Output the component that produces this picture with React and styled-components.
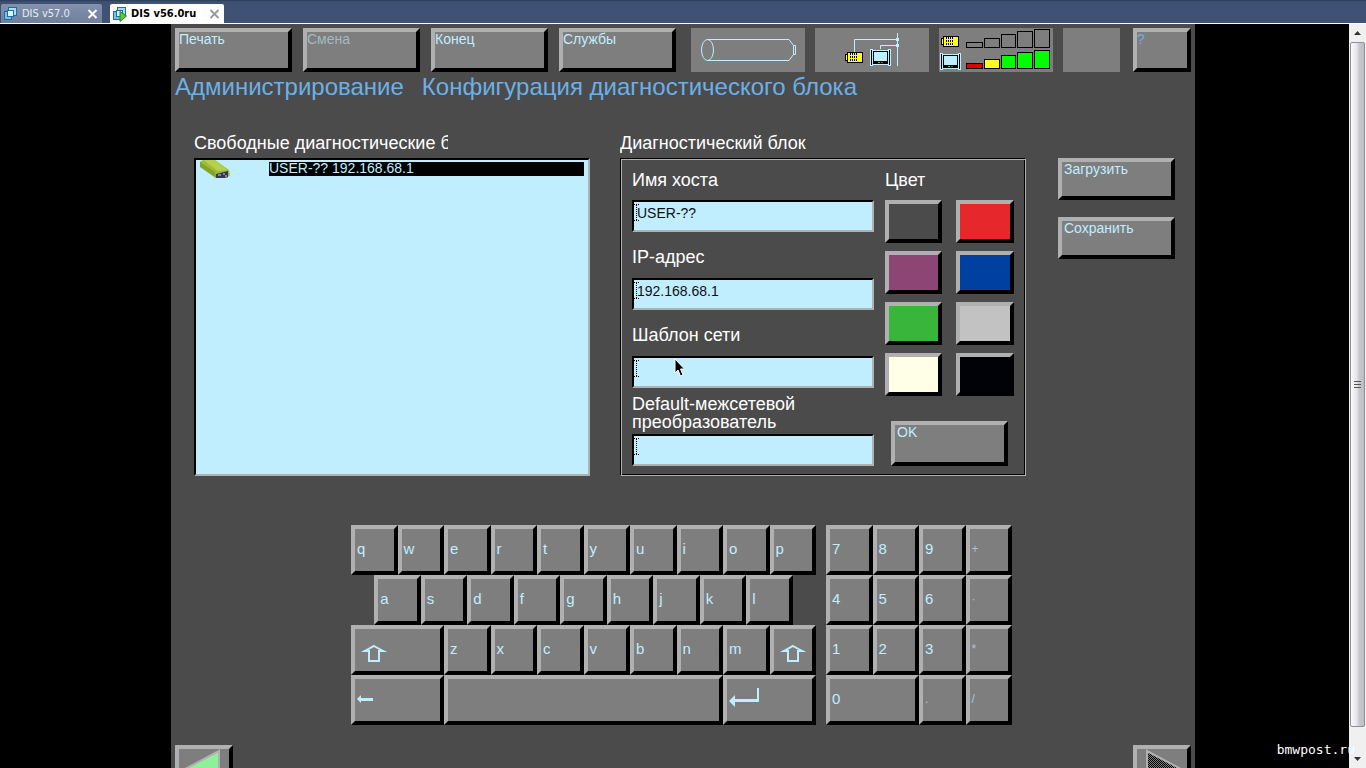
import React, { useState } from "react";
import styled, { createGlobalStyle } from "styled-components";

const c = {
  ground: "#4b4b4b",
  face: "#7e7e7e",
  light: "#b0b0b0",
  ink: "#c0eeff",
  title: "#6cb0e6",
  field: "#c0eeff",
};

const Global = createGlobalStyle`
  * { box-sizing: border-box; }
  html, body, #root { height: 100%; }
  body { margin: 0; overflow: hidden; background: #000; font-family: "Liberation Sans", Arial, sans-serif; }
  button, input { font-family: inherit; border-radius: 0; margin: 0; }
  svg { display: block; flex: none; }
`;

const Page = styled.div`
  height: 100vh;
  display: flex;
  flex-direction: column;
  position: relative;
`;

const TabBar = styled.nav`
  flex: none;
  height: 24px;
  display: flex;
  align-items: flex-end;
  gap: 8px;
  padding-left: 1px;
  background: linear-gradient(#2b3b58 0, #3f5275 2px, #3f5275 100%);
  border-bottom: 1px solid #fff;
`;

const Tab = styled.div`
  display: flex;
  align-items: center;
  width: ${(p) => (p.$active ? 114 : 101)}px;
  height: 19px;
  padding: 0 4px 0 2px;
  border-radius: 2px 2px 0 0;
  background: ${(p) => (p.$active ? "#fff" : "linear-gradient(#8391ac, #6f7f9d)")};
`;

const TabName = styled.a`
  flex: 1;
  margin-left: 3px;
  font: ${(p) => (p.$active ? "bold" : "normal")} 11px/18px "DejaVu Sans Condensed", "DejaVu Sans", sans-serif;
  color: ${(p) => (p.$active ? "#000" : "#e6ebf3")};
  text-decoration: none;
  white-space: nowrap;
`;

const CloseButton = styled.button`
  display: flex;
  padding: 0;
  border: 0;
  background: none;
  color: ${(p) => (p.$active ? "#9a9a9a" : "#fff")};
`;

const Viewer = styled.div`
  flex: 1;
  min-height: 0;
  display: grid;
  grid-template-columns: 17px minmax(0, 1fr) 17px;
`;

const Screen = styled.main`
  grid-column: 2;
  justify-self: center;
  width: 100%;
  max-width: 1024px;
  min-height: 0;
  overflow: hidden;
  padding: 4px 4px 0;
  background: ${c.ground};
`;

const Toolbar = styled.div`
  display: flex;
  justify-content: space-between;
`;

const Group = styled.div`
  display: flex;
  gap: ${(p) => p.$gap}px;
  padding-left: ${(p) => p.$lead || 0}px;
`;

const Raised = styled.button`
  display: flex;
  align-items: flex-start;
  flex: none;
  width: ${(p) => p.$w || 117}px;
  height: ${(p) => p.$h || 44}px;
  padding: 0 ${(p) => p.$pad || 0}px;
  border: 4px solid;
  border-color: ${c.light} #000 #000 ${c.light};
  background: ${(p) => p.$face || c.face};
  color: ${(p) => p.$color || c.ink};
  font-size: 14px;
  line-height: 14px;
  text-align: left;
  &:disabled { color: #a3bac1; }
`;

const Indicator = styled.div`
  width: ${(p) => p.$w || 114}px;
  height: 44px;
  background: ${c.face};
`;

const Title = styled.h1`
  display: flex;
  gap: 18px;
  margin: 0;
  font-size: 24px;
  line-height: 30px;
  font-weight: normal;
  color: ${c.title};
  white-space: nowrap;
`;

const Columns = styled.div`
  display: flex;
  align-items: flex-start;
  padding: 31px 16px 0 19px;
`;

const Section = styled.section`
  width: ${(p) => p.$w}px;
  margin-right: ${(p) => p.$after}px;
`;

const Caption = styled.h2`
  margin: 0;
  width: ${(p) => (p.$clip ? "254px" : "auto")};
  overflow: hidden;
  font-size: 18px;
  line-height: 20px;
  height: 25px;
  font-weight: normal;
  color: #fff;
  white-space: nowrap;
`;

const ListBox = styled.ul`
  height: 318px;
  margin: 0;
  padding: 0 4px;
  list-style: none;
  border: 2px solid;
  border-color: #000 ${c.light} ${c.light} #000;
  background: ${c.field};
`;

const ListRow = styled.li`
  display: flex;
  align-items: flex-start;
`;

const ListText = styled.span`
  flex: 1;
  margin: 2px 0 0 39px;
  height: 14px;
  font-size: 14px;
  line-height: 12px;
  color: ${c.ink};
  background: #000;
`;

const Panel = styled.form`
  display: flex;
  gap: 11px;
  height: 318px;
  padding: 0 11px;
  border: 1px solid;
  border-color: #000 ${c.light} ${c.light} #000;
  box-shadow: inset 1px 1px ${c.light}, inset -1px -1px #000;
`;

const Fields = styled.div`
  width: 242px;
`;

const Field = styled.div`
  position: relative;
`;

const FieldLabel = styled.label`
  display: flex;
  align-items: center;
  height: ${(p) => (p.$first ? 41 : 46)}px;
  padding-top: ${(p) => (p.$first ? 0 : 3)}px;
  font-size: 18px;
  line-height: 18px;
  color: #fff;
`;

const TextBox = styled.input`
  display: block;
  width: 100%;
  height: 32px;
  padding: 0 3px 6px;
  border: 2px solid;
  border-color: #000 ${c.light} ${c.light} #000;
  background: ${c.field};
  color: #111;
  font-size: 14px;
  outline: none;
`;

const Caret = styled.svg`
  position: absolute;
  left: 2px;
  bottom: 11px;
`;

const Colors = styled.div`
  width: 129px;
`;

const Swatches = styled.div`
  display: grid;
  grid-template-columns: 57px 58px;
  gap: 8px 14px;
  margin-bottom: 25px;
`;

const OkSlot = styled.div`
  padding-left: 6px;
`;

const Actions = styled.div`
  display: flex;
  flex-direction: column;
  gap: 17px;
  padding-top: 25px;
`;

const Keyboard = styled.div`
  display: flex;
  gap: 10px;
  padding: 49px 0 20px 176px;
`;

const Keys = styled.div`
  display: grid;
  grid-template-columns: repeat(${(p) => p.$units}, minmax(0, 1fr));
  grid-auto-rows: 50px;
  width: ${(p) => p.$w}px;
`;

const Key = styled.button`
  grid-column: ${(p) => (p.$at ? p.$at + " / " : "")}span ${(p) => p.$span || 2};
  display: flex;
  align-items: center;
  padding: 0 0 2px 2px;
  border: 4px solid;
  border-color: ${c.light} #000 #000 ${c.light};
  background: ${c.face};
  color: ${c.ink};
  font-size: 15px;
  line-height: 16px;
  &:disabled { color: #a9c6cf; font-size: 12px; }
`;

const ScrollBar = styled.div`
  grid-column: 3;
  display: flex;
  flex-direction: column;
  align-items: center;
  background: #f0f0f0;
`;

const ScrollArrow = styled.button`
  display: flex;
  align-items: center;
  justify-content: center;
  width: 17px;
  height: 18px;
  padding: 0;
  border: 0;
  background: none;
`;

const Thumb = styled.div`
  flex: 1;
  display: flex;
  align-items: center;
  justify-content: center;
  width: 15px;
  margin-bottom: 23px;
  border: 1px solid #8e8f93;
  border-radius: 2px;
  background: linear-gradient(90deg, #fafafa, #e6e6e9 45%, #c9cace 60%, #bcbdc3);
`;

const Watermark = styled.span`
  position: absolute;
  right: 11px;
  bottom: 9px;
  font: 13px/18px "DejaVu Sans Mono", monospace;
  color: #fff;
`;

const Pointer = styled.svg`
  position: absolute;
  left: 42px;
  bottom: 10px;
`;

function VmIcon({ running }) {
  return (
    <svg width="16" height="16" viewBox="0 0 16 16" aria-hidden="true">
      <g stroke="#1d6f9f" fill="#a8dcf2">
        <rect x="5.5" y="1.5" width="8" height="8" />
        <rect x="1.5" y="5.5" width="7" height="8" fill="#78bfe2" />
        <rect x="4.5" y="4.5" width="6" height="6" fill="#d9f3fc" />
      </g>
      {running && <path d="M8 5.5 14.5 10 8 15.5Z" fill="#5ccb3c" stroke="#23801a" />}
    </svg>
  );
}

function Cross() {
  return (
    <svg width="11" height="10" viewBox="0 0 11 10" aria-hidden="true">
      <path d="M1.5 1 9.5 9M9.5 1 1.5 9" stroke="currentColor" strokeWidth="2" />
    </svg>
  );
}

function BatteryGlyph({ x, y }) {
  return (
    <g transform={`translate(${x} ${y})`} shapeRendering="crispEdges">
      <rect x="0" y="2" width="3" height="7" fill="#000" />
      <rect x="1" y="3" width="1" height="5" fill="#ff3" />
      <rect x="2" y="0" width="16" height="11" fill="#000" />
      <rect x="3" y="1" width="14" height="9" fill="#ffff1e" />
      <path d="M5.5 1v9M7.5 1v9M9.5 1v9M11.5 1v9" stroke="#000" strokeDasharray="2 1" />
    </g>
  );
}

function MonitorGlyph({ x, y }) {
  return (
    <g transform={`translate(${x} ${y})`} shapeRendering="crispEdges">
      <path d="M0 0h3v1h15v-1h3v17h-3v-1h-15v1h-3z" fill={c.ink} />
      <rect x="1" y="1" width="1" height="15" fill="#000" />
      <rect x="19" y="1" width="1" height="15" fill="#000" />
      <rect x="3" y="2" width="15" height="13" fill="#000" />
      <rect x="4" y="3" width="13" height="9" fill={c.ink} />
      <rect x="8" y="13" width="2" height="1" fill="#4c4" />
      <rect x="11" y="13" width="2" height="1" fill="#d33" />
    </g>
  );
}

function CylinderDrawing() {
  return (
    <svg width="114" height="44" viewBox="0 0 114 44" fill="none" stroke={c.ink} aria-hidden="true">
      <ellipse cx="16.5" cy="22" rx="6" ry="10.5" />
      <path d="M16.5 11.5H98L102.5 17.5V26.5L98 32.5H16.5M102.5 17.5H104.5V26.5H102.5" />
    </svg>
  );
}

function WiringDrawing() {
  return (
    <svg width="114" height="44" viewBox="0 0 114 44" fill="none" aria-hidden="true">
      <path d="M39.5 24V11.5H82.5M65.5 21V17.5H82.5M82.5 5V38" stroke={c.ink} />
      <path d="M81 10h3v3h-3zM81 16h3v3h-3z" fill={c.ink} />
      <BatteryGlyph x={30} y={24} />
      <MonitorGlyph x={55} y={21} />
    </svg>
  );
}

const bars = [
  { x: 27, w: 17, top: 14, low: 35, color: "#e00000" },
  { x: 45, w: 16, top: 10, low: 31, color: "#ffff1e" },
  { x: 62, w: 15, top: 6, low: 27, color: "#00ff00" },
  { x: 78, w: 16, top: 3, low: 24, color: "#00ff00" },
  { x: 95, w: 16, top: 1, low: 22, color: "#00ff00" },
];

function SignalDrawing() {
  return (
    <svg width="114" height="44" viewBox="0 0 114 44" fill="none" aria-hidden="true">
      <BatteryGlyph x={2} y={8} />
      <MonitorGlyph x={1} y={25} />
      {bars.map((b) => (
        <g key={b.x} stroke="#000" shapeRendering="crispEdges">
          <rect x={b.x + 0.5} y={b.top + 0.5} width={b.w - 1} height={19 - b.top} />
          <rect x={b.x + 0.5} y={b.low + 0.5} width={b.w - 1} height={40 - b.low} fill={b.color} />
        </g>
      ))}
    </svg>
  );
}

function HeadIcon() {
  return (
    <svg width="30" height="18" viewBox="0 0 30 18" aria-hidden="true">
      <path d="M0 2 3 0H15L29 10 30 15 27 18H16L0 6Z" fill="#9dbb35" />
      <path d="M3 0H15L28 10 18 11Z" fill="#b5d04c" />
      <path d="M0 2 15 12 16 18 0 7Z" fill="#86a327" />
      <path d="M16 14 28 11 28 17 24 18H16Z" fill="#34375a" />
      <path d="M18 15h3M23 14h2M25 16h2" stroke="#c9cbe8" />
    </svg>
  );
}

function ShiftIcon() {
  return (
    <svg width="33" height="28" viewBox="0 0 33 28" fill="none" stroke={c.ink} strokeWidth="2" aria-hidden="true">
      <path d="M17 11 26 16H22V26H12V16H8Z" />
      <path d="M4 16.5 9 15V17ZM30 16.500 25 15V17Z" fill={c.ink} stroke="none" />
    </svg>
  );
}

function BackIcon() {
  return (
    <svg width="16" height="8" viewBox="0 0 16 8" fill={c.ink} aria-hidden="true">
      <path d="M0 4 4 0V3H16V6H4V8Z" />
    </svg>
  );
}

function EnterIcon() {
  return (
    <svg width="30" height="22" viewBox="0 0 30 22" aria-hidden="true">
      <path d="M29 0V13" fill="none" stroke={c.ink} strokeWidth="2" />
      <path d="M0 13 6 7V19ZM5 11H30V14H5Z" fill={c.ink} />
    </svg>
  );
}

function Arrow({ left }) {
  return (
    <svg width="50" height="40" viewBox="0 0 50 40" aria-hidden="true">
      <defs>
        <pattern id="mesh" width="2" height="2" patternUnits="userSpaceOnUse">
          <rect width="2" height="2" fill="#7e7e7e" />
          <path d="M0 0h1v1h-1zM1 1h1v1h-1z" fill="#000" />
        </pattern>
      </defs>
      {left ? (
        <path d="M40 2V37L6 20Z" fill="#8ff09a" stroke={c.light} strokeWidth="2" />
      ) : (
        <path d="M10 2V37L44 20Z" fill="url(#mesh)" stroke={c.light} strokeWidth="2" />
      )}
    </svg>
  );
}

const fields = [
  { id: "host", label: ["Имя хоста"], value: "USER-??" },
  { id: "ip", label: ["IP-адрес"], value: "192.168.68.1" },
  { id: "mask", label: ["Шаблон сети"], value: "", pointer: true },
  { id: "gateway", label: ["Default-межсетевой", "преобразователь"], value: "" },
];

const swatches = [
  ["Тёмно-серый", "#4b4b4b"],
  ["Красный", "#e6282c"],
  ["Фиолетовый", "#8c4574"],
  ["Синий", "#0040a0"],
  ["Зелёный", "#3ab53c"],
  ["Серый", "#c2c2c2"],
  ["Белый", "#ffffe8"],
  ["Чёрный", "#000208"],
];

function LabelledField({ field, first }) {
  const [value, setValue] = useState(field.value);
  return (
    <Field>
      <FieldLabel htmlFor={field.id} $first={first}>
        <span>
          {field.label.map((line, i) => (
            <React.Fragment key={line}>
              {i > 0 && <br />}
              {line}
            </React.Fragment>
          ))}
        </span>
      </FieldLabel>
      <TextBox id={field.id} value={value} onChange={(e) => setValue(e.target.value)} />
      <Caret width="5" height="17" viewBox="0 0 5 17" fill="none" stroke="#000" aria-hidden="true">
        <path d="M2.5 1V16M0 .5H5M0 16.5H5" strokeDasharray="1 1" />
      </Caret>
      {field.pointer && (
        <Pointer width="12" height="20" viewBox="0 0 12 20" aria-hidden="true">
          <path d="M1 1V15L4 12 6.5 18 9 17 6.5 11H10.5Z" fill="#000" stroke="#fff" />
        </Pointer>
      )}
    </Field>
  );
}

export default function App() {
  return (
    <Page>
      <Global />
      <TabBar>
        <Tab>
          <VmIcon />
          <TabName href="#v57">DIS v57.0</TabName>
          <CloseButton aria-label="Закрыть DIS v57.0"><Cross /></CloseButton>
        </Tab>
        <Tab $active>
          <VmIcon running />
          <TabName href="#v56" $active>DIS v56.0ru</TabName>
          <CloseButton $active aria-label="Закрыть DIS v56.0ru"><Cross /></CloseButton>
        </Tab>
      </TabBar>
      <Viewer>
        <Screen>
          <Toolbar>
            <Group $gap={11}>
              <Raised>Печать</Raised>
              <Raised disabled>Смена</Raised>
              <Raised>Конец</Raised>
              <Raised>Службы</Raised>
            </Group>
            <Group $gap={10} $lead={2}>
              <Indicator><CylinderDrawing /></Indicator>
              <Indicator><WiringDrawing /></Indicator>
              <Indicator><SignalDrawing /></Indicator>
              <Indicator $w={57} />
            </Group>
            <Raised $w={58} $color={c.title}>?</Raised>
          </Toolbar>
          <Title>
            <span>Администрирование</span>
            <span>Конфигурация диагностического блока</span>
          </Title>
          <Columns>
            <Section $w={396} $after={30}>
              <Caption $clip>Свободные диагностические б</Caption>
              <ListBox>
                <ListRow>
                  <HeadIcon />
                  <ListText>USER-?? 192.168.68.1</ListText>
                </ListRow>
              </ListBox>
            </Section>
            <Section $w={406} $after={32}>
              <Caption>Диагностический блок</Caption>
              <Panel onSubmit={(e) => e.preventDefault()}>
                <Fields>
                  {fields.map((f, i) => (
                    <LabelledField key={f.id} field={f} first={i === 0} />
                  ))}
                </Fields>
                <Colors>
                  <FieldLabel as="div" $first>Цвет</FieldLabel>
                  <Swatches>
                    {swatches.map(([name, color], i) => (
                      <Raised key={name} type="button" aria-label={name} $w={57 + (i % 2)} $h={43} $face={color} />
                    ))}
                  </Swatches>
                  <OkSlot>
                    <Raised $h={45} $pad={2}>OK</Raised>
                  </OkSlot>
                </Colors>
              </Panel>
            </Section>
            <Actions>
              <Raised $h={42} $pad={2}>Загрузить</Raised>
              <Raised $h={42} $pad={2}>Сохранить</Raised>
            </Actions>
          </Columns>
          <Keyboard>
            <Keys $units={20} $w={465}>
              {[..."qwertyuiop"].map((k) => <Key key={k}>{k}</Key>)}
              {[..."asdfghjkl"].map((k, i) => <Key key={k} $at={i === 0 ? 2 : undefined}>{k}</Key>)}
              <Key $at={1} $span={4} aria-label="Shift"><ShiftIcon /></Key>
              {[..."zxcvbnm"].map((k) => <Key key={k}>{k}</Key>)}
              <Key aria-label="Shift"><ShiftIcon /></Key>
              <Key $span={4} aria-label="Backspace"><BackIcon /></Key>
              <Key $span={12} aria-label="Пробел" />
              <Key $span={4} aria-label="Enter"><EnterIcon /></Key>
            </Keys>
            <Keys $units={8} $w={186}>
              {[..."789"].map((k) => <Key key={k}>{k}</Key>)}
              <Key disabled>+</Key>
              {[..."456"].map((k) => <Key key={k}>{k}</Key>)}
              <Key disabled>·</Key>
              {[..."123"].map((k) => <Key key={k}>{k}</Key>)}
              <Key disabled>*</Key>
              <Key $span={4}>0</Key>
              <Key disabled>.</Key>
              <Key disabled>/</Key>
            </Keys>
          </Keyboard>
          <Toolbar>
            <Raised $w={58} aria-label="Назад"><Arrow left /></Raised>
            <Raised $w={58} aria-label="Вперёд" disabled><Arrow /></Raised>
          </Toolbar>
        </Screen>
        <ScrollBar>
          <ScrollArrow aria-label="Вверх">
            <svg width="7" height="4" viewBox="0 0 7 4"><path d="M3.5 0 7 4H0Z" fill="#333" /></svg>
          </ScrollArrow>
          <Thumb>
            <svg width="7" height="9" viewBox="0 0 7 9" stroke="#555"><path d="M0 1.5H7M0 4.5H7M0 7.5H7" /></svg>
          </Thumb>
          <ScrollArrow aria-label="Вниз">
            <svg width="7" height="4" viewBox="0 0 7 4"><path d="M0 0H7L3.5 4Z" fill="#333" /></svg>
          </ScrollArrow>
        </ScrollBar>
      </Viewer>
      <Watermark>bmwpost.ru</Watermark>
    </Page>
  );
}
